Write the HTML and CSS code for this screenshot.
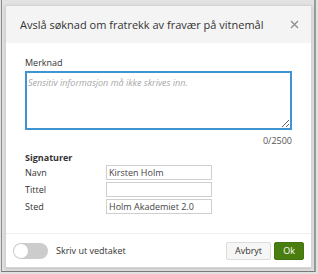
FILE: index.html
```html
<!DOCTYPE html>
<html lang="no">

<head>
    <meta charset="UTF-8">
    <meta name="viewport" content="width=device-width, initial-scale=1.0">
    <title>Avslå søknad</title>
    <link rel="stylesheet" href="styles.css">
</head>

<body>
    <div class="frame">
        <div class="dialog">
            <div class="dialog-header">
                <h2>Avslå søknad om fratrekk av fravær på vitnemål</h2>
                <button class="close-btn" title="Lukk">
                    <svg width="9" height="9" viewBox="0 0 9 9">
                        <path d="M1 1 L8 8 M8 1 L1 8" stroke="#8a8a8a" stroke-width="1.2" fill="none" />
                    </svg>
                </button>
            </div>

            <div class="dialog-body">
                <label class="field-label" for="merknad">Merknad</label>
                <textarea id="merknad" placeholder="Sensitiv informasjon må ikke skrives inn."></textarea>
                <div class="counter">0/2500</div>

                <h3>Signaturer</h3>
                <div class="sign-grid">
                    <label for="navn">Navn</label>
                    <input type="text" id="navn" value="Kirsten Holm">
                    <label for="tittel">Tittel</label>
                    <input type="text" id="tittel" value="">
                    <label for="sted">Sted</label>
                    <input type="text" id="sted" value="Holm Akademiet 2.0">
                </div>
            </div>

            <div class="dialog-footer">
                <label class="toggle">
                    <span class="switch"><span class="knob"></span></span>
                    <span>Skriv ut vedtaket</span>
                </label>
                <div class="buttons">
                    <button class="cancel-btn">Avbryt</button>
                    <button class="ok-btn">Ok</button>
                </div>
            </div>
        </div>
    </div>
</body>

</html>
```

FILE: styles.css
```css
html,
body {
    margin: 0;
    padding: 0;
    background-color: #e2e2e2;
}

body {
    font-family: "Open Sans", Arial, sans-serif;
    color: #333;
    font-size: 9px;
}

.frame {
    height: 272px;
    margin: 0 2px 0 1px;
    padding: 5px 2px 0 3px;
    border-left: 1px solid #8c8c8c;
    border-right: 2px solid #9a9a9a;
    border-bottom: 1px solid #7a7a7a;
    box-sizing: border-box;
}

.dialog {
    width: 307px;
    height: 263px;
    background-color: white;
    border: 1px solid #d4d4d4;
    box-sizing: border-box;
    display: flex;
    flex-direction: column;
    box-shadow: 0 1px 3px rgba(0, 0, 0, 0.15);
}

.dialog-header {
    height: 37px;
    background-color: #f4f4f4;
    display: flex;
    align-items: center;
    justify-content: space-between;
    padding: 0 12px 0 14px;
    flex-shrink: 0;
}

.dialog-header h2 {
    margin: 0;
    font-size: 11px;
    font-weight: normal;
    color: #333;
}

.close-btn {
    background: none;
    border: none;
    padding: 0;
    width: 9px;
    height: 9px;
    display: flex;
}

.dialog-body {
    flex-grow: 1;
    padding: 13px 19px 0 19px;
    display: flex;
    flex-direction: column;
}

.field-label {
    display: block;
    margin-bottom: 2px;
}

textarea {
    height: 59px;
    border: 2px solid #3f95d2;
    padding: 3px 1px;
    box-sizing: border-box;
    font-family: inherit;
    font-size: 9px;
    resize: vertical;
    outline: none;
}

textarea::placeholder {
    color: #a8a8a8;
    font-style: italic;
}

.counter {
    text-align: right;
    margin-top: 4px;
    color: #555;
}

h3 {
    margin: 4px 0 1px 0;
    font-size: 9px;
    font-weight: bold;
}

.sign-grid {
    display: grid;
    grid-template-columns: 81px 106px;
    row-gap: 2px;
    align-items: center;
}

.sign-grid input {
    height: 15px;
    border: 1px solid #cfcfcf;
    padding: 0 2px;
    box-sizing: border-box;
    font-family: inherit;
    font-size: 9px;
    color: #444;
    outline: none;
}

.dialog-footer {
    height: 33px;
    border-top: 1px solid #eeeeee;
    display: flex;
    align-items: center;
    justify-content: space-between;
    padding: 0 7px 0 7px;
    flex-shrink: 0;
}

.toggle {
    display: flex;
    align-items: center;
    gap: 8px;
}

.switch {
    width: 35px;
    height: 16px;
    border-radius: 8px;
    background-color: #cccccc;
    display: flex;
    align-items: center;
    padding: 0 1px;
    box-sizing: border-box;
}

.knob {
    width: 14px;
    height: 14px;
    border-radius: 50%;
    background-color: white;
}

.buttons {
    display: flex;
    gap: 3px;
}

.cancel-btn,
.ok-btn {
    height: 18px;
    font-family: inherit;
    font-size: 9px;
    border-radius: 2px;
    padding: 0;
}

.cancel-btn {
    width: 45px;
    background-color: #f6f6f6;
    border: 1px solid #dcdcdc;
    color: #333;
}

.ok-btn {
    width: 30px;
    background-color: #4a7d10;
    border: 1px solid #44740e;
    color: white;
}
```
